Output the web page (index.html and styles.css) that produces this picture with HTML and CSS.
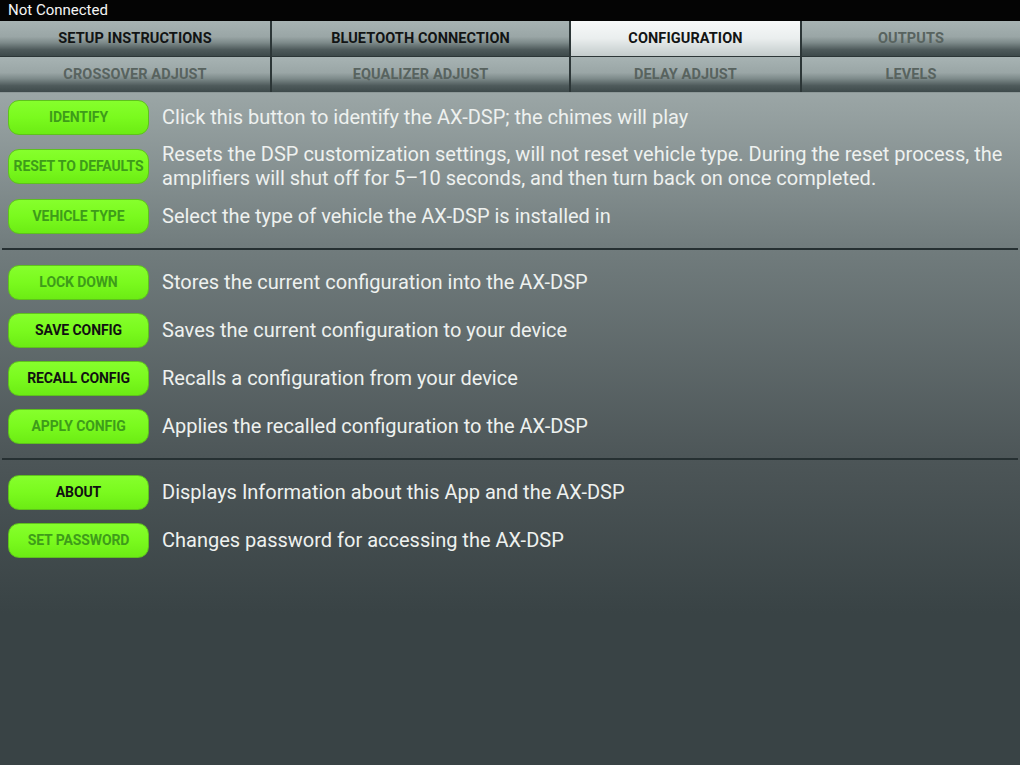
FILE: index.html
```html
<!DOCTYPE html>
<html lang="en">
<head>
    <meta charset="UTF-8">
    <meta name="viewport" content="width=device-width, initial-scale=1.0">
    <title>AX-DSP Configuration</title>
    <link rel="stylesheet" href="styles.css">
</head>
<body>
    <div class="status-bar">Not Connected</div>

    <div class="tabs">
        <div class="tab">SETUP INSTRUCTIONS</div>
        <div class="tab">BLUETOOTH CONNECTION</div>
        <div class="tab active">CONFIGURATION</div>
        <div class="tab disabled">OUTPUTS</div>
        <div class="tab disabled">CROSSOVER ADJUST</div>
        <div class="tab disabled">EQUALIZER ADJUST</div>
        <div class="tab disabled">DELAY ADJUST</div>
        <div class="tab disabled">LEVELS</div>
    </div>

    <div class="content">
        <div class="section">
            <div class="row">
                <button class="btn disabled">IDENTIFY</button>
                <p>Click this button to identify the AX-DSP; the chimes will play</p>
            </div>
            <div class="row tall">
                <button class="btn disabled">RESET TO DEFAULTS</button>
                <p>Resets the DSP customization settings, will not reset vehicle type. During the reset process, the amplifiers will shut off for 5–10 seconds, and then turn back on once completed.</p>
            </div>
            <div class="row">
                <button class="btn disabled">VEHICLE TYPE</button>
                <p>Select the type of vehicle the AX-DSP is installed in</p>
            </div>
        </div>

        <div class="section">
            <div class="row">
                <button class="btn disabled">LOCK DOWN</button>
                <p>Stores the current configuration into the AX-DSP</p>
            </div>
            <div class="row">
                <button class="btn">SAVE CONFIG</button>
                <p>Saves the current configuration to your device</p>
            </div>
            <div class="row">
                <button class="btn">RECALL CONFIG</button>
                <p>Recalls a configuration from your device</p>
            </div>
            <div class="row">
                <button class="btn disabled">APPLY CONFIG</button>
                <p>Applies the recalled configuration to the AX-DSP</p>
            </div>
        </div>

        <div class="section last">
            <div class="row">
                <button class="btn">ABOUT</button>
                <p>Displays Information about this App and the AX-DSP</p>
            </div>
            <div class="row">
                <button class="btn disabled">SET PASSWORD</button>
                <p>Changes password for accessing the AX-DSP</p>
            </div>
        </div>
    </div>
</body>
</html>
```

FILE: styles.css
```css
html, body {
    margin: 0;
    padding: 0;
    height: 100%;
}
body {
    font-family: Roboto, "Liberation Sans", sans-serif;
    background-color: #394345;
    display: flex;
    flex-direction: column;
    overflow: hidden;
}
.status-bar {
    height: 21px;
    line-height: 21px;
    background-color: #040404;
    color: #f4f4f4;
    font-size: 15px;
    padding-left: 8px;
}
.tabs {
    display: grid;
    grid-template-columns: 270px 297px 229px 1fr;
    grid-auto-rows: 35px;
    column-gap: 2px;
    row-gap: 1px;
    background-color: #2c3637;
}
.tab {
    display: flex;
    align-items: center;
    justify-content: center;
    font-size: 14.5px;
    font-weight: bold;
    letter-spacing: 0.1px;
    color: #121414;
    background: linear-gradient(#a7b3b3 0%, #9aa6a6 45%, #7d8a8a 62%, #4e5a5b 82%, #3e4a4b 100%);
}
.tab.active {
    background: linear-gradient(#f7f9f9 0%, #eaeeee 50%, #d2d9d9 80%, #c4cccc 100%);
}
.tab.disabled {
    color: #58635f;
}
.content {
    flex: 1;
    background: linear-gradient(#9ba6a6 0px, #717c7d 155px, #4c5557 370px, #394345 520px, #394345 100%);
    border-top: 1px solid #8d9898;
}
.section {
    padding: 3px 0 11px;
    border-bottom: 2px solid #263032;
    margin: 0 2px;
    display: flex;
    flex-direction: column;
    gap: 6px;
}
.section + .section {
    padding-top: 11px;
}
.section.last {
    border-bottom: none;
}
.row {
    display: flex;
    align-items: center;
    min-height: 42px;
    gap: 13px;
    padding-left: 6px;
}
.row.tall {
    margin: -2px 0 -1px;
    min-height: 45px;
}
.row p {
    margin: 0;
    font-size: 20px;
    line-height: 24px;
    color: #eef1ef;
    padding-right: 6px;
}
.btn {
    flex: none;
    width: 141px;
    height: 35px;
    border: 1px solid #5ec21c;
    border-radius: 11px;
    background: linear-gradient(#86ff2c 0%, #7afa1e 50%, #6cec14 100%);
    font-family: Roboto, "Liberation Sans", sans-serif;
    font-size: 14px;
    font-weight: bold;
    letter-spacing: -0.1px;
    color: #111;
    padding: 0;
    cursor: pointer;
}
.btn.disabled {
    color: #3e9c1a;
}
```
